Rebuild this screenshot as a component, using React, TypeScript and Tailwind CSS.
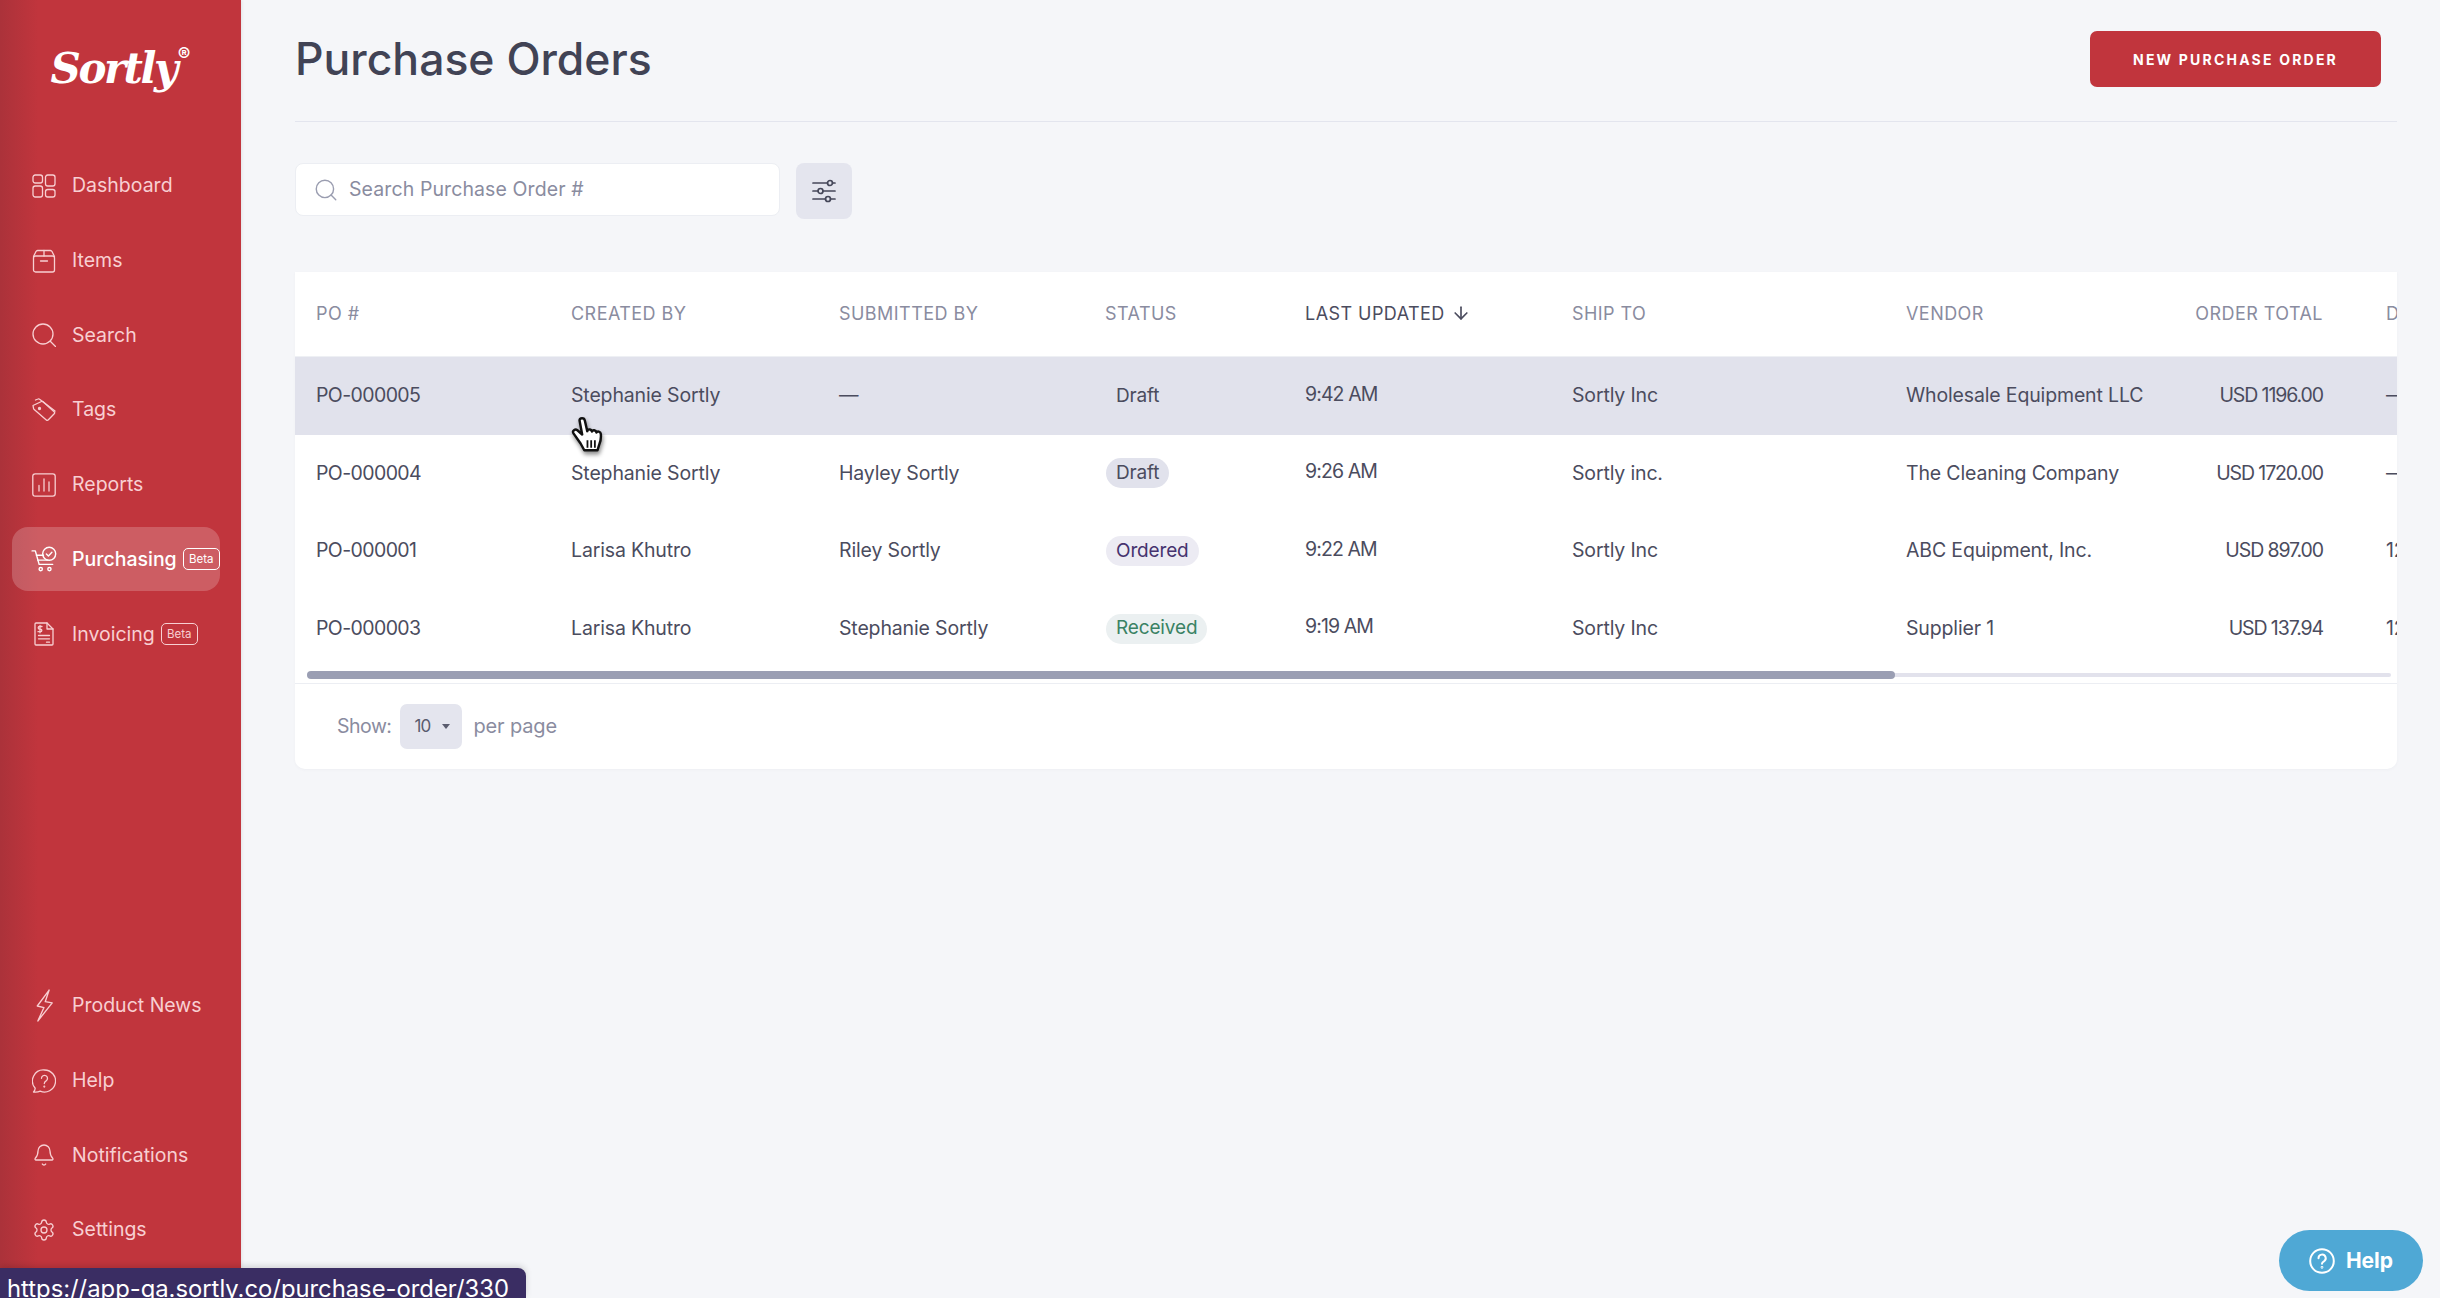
import React from "react";
import { Search, Settings, Bell, ArrowDown } from "lucide-react";

type IconProps = { className?: string };

const S = ({ children, className }: { children: React.ReactNode; className?: string }) => (
  <svg viewBox="0 0 24 24" fill="none" stroke="currentColor" strokeWidth="1.3" strokeLinecap="round" strokeLinejoin="round" className={className}>
    {children}
  </svg>
);

const DashIcon = ({ className }: IconProps) => (
  <S className={className}>
    <rect x="1" y="1" width="9.5" height="8" rx="2.2" />
    <rect x="13.5" y="1" width="9.5" height="11" rx="2.2" />
    <rect x="1" y="12" width="9.5" height="11" rx="2.2" />
    <rect x="13.5" y="15.5" width="9.5" height="7.5" rx="2.2" />
  </S>
);
const BoxIcon = ({ className }: IconProps) => (
  <S className={className}>
    <path d="M1.5 7.5 4 2.5a2 2 0 0 1 1.6-1h12.8a2 2 0 0 1 1.6 1l2.5 5" />
    <rect x="1.5" y="7" width="21" height="16" rx="2" />
    <path d="M12 1.5V7M8.5 12h7" />
  </S>
);
const SearchIcon = ({ className }: IconProps) => (
  <S className={className}>
    <circle cx="11" cy="11" r="10" />
    <path d="m18.5 18.5 5 5" />
  </S>
);
const TagIcon = ({ className }: IconProps) => (
  <S className={className}>
    <path d="M1 8.5 9.5 4.5a1.5 1.5 0 0 1 1.6.2l11 10a1.5 1.5 0 0 1 .1 2.1l-5.8 6a1.5 1.5 0 0 1-2.1.1L2.2 12.6a2 2 0 0 1-.7-1.4Z" transform="translate(0 -1)" />
    <path d="M3.5 2 6 1a1.5 1.5 0 0 1 1.6.2L23 13" />
    <circle cx="7.5" cy="10.5" r="1" fill="currentColor" />
  </S>
);
const ReportIcon = ({ className }: IconProps) => (
  <S className={className}>
    <rect x="0.8" y="0.8" width="22.4" height="22.4" rx="2.4" />
    <path d="M7 18v-5.5M12 18V6M17 18V9" />
  </S>
);
const CartIcon = ({ className }: IconProps) => (
  <S className={className}>
    <path d="M1 4.5h3l3.5 12.5h12.5" />
    <path d="M5 8.5h6.5M6.2 13h9.3" />
    <circle cx="16.8" cy="7.2" r="6" />
    <path d="m14.2 7.3 1.9 1.9 3.2-3.4" />
    <circle cx="9" cy="21.3" r="1.5" />
    <circle cx="17" cy="21.3" r="1.5" />
  </S>
);
const DocIcon = ({ className }: IconProps) => (
  <S className={className}>
    <path d="M4 1h11l6 6v15a1 1 0 0 1-1 1H4a1 1 0 0 1-1-1V2a1 1 0 0 1 1-1Z" />
    <path d="M15 1v6h6M6.5 13.5h11M6.5 16.8h11M14.5 20.2h3" />
    <path d="M10 4.5H7.5a1.2 1.2 0 0 0 0 2.6h1a1.2 1.2 0 0 1 0 2.6H6M8 3.4v7.4" />
  </S>
);
const BoltIcon = ({ className }: IconProps) => (
  <svg viewBox="0 0 18 32" fill="none" stroke="currentColor" strokeWidth="1.3" strokeLinecap="round" strokeLinejoin="round" className={className}>
    <path d="M13.500 1 2 16.500l6.500 1.500L2.500 31 16.500 13.500l-6.800-1.200Z" />
  </svg>
);
const HelpIcon = ({ className }: IconProps) => (
  <S className={className}>
    <path d="M12.5 1a11 11 0 1 1-4.3 21.1c-2 1-4.4 1.1-6.7.9 1-1 1.6-2.3 1.7-3.8A11 11 0 0 1 12.5 1Z" />
    <path d="M9.5 9.3a3 3 0 1 1 4.6 2.6c-1.2.7-1.8 1.3-1.8 2.6" />
    <circle cx="12.3" cy="17.6" r=".4" fill="currentColor" />
  </S>
);
const FilterIcon = ({ className }: IconProps) => (
  <svg viewBox="0 0 24 24" fill="none" stroke="currentColor" strokeWidth="1.7" strokeLinecap="round" className={className}>
    <path d="M1 4h14.5M20.5 4H23M1 12h5M11 12h12M1 20h12.5M18.5 20H23" />
    <circle cx="18" cy="4" r="2.5" />
    <circle cx="8.5" cy="12" r="2.5" />
    <circle cx="16" cy="20" r="2.5" />
  </svg>
);
const HandCursor = ({ className }: IconProps) => (
  <svg viewBox="0 0 32 34" className={className}>
    <path
      d="M8 3.4c0-3 4.6-3 5 0l2.3 10c.4-2.4 4-2.2 4.4.4.6-2 3.8-1.6 4.3.8.8-1.6 3.9-1 4.1 1.4.4 4.2-.3 7.600-1.600 10.400l-1.500 5H12.500l-3.500-6.400L2.300 15.500c-1.600-2.500 1.600-4.600 3.700-3l4.500 4Z"
      fill="#fff"
      stroke="#111"
      strokeWidth="2.3"
      strokeLinejoin="round"
    />
    <path d="M15.500 22v7M19 22v7M22.500 22v7" stroke="#111" strokeWidth="1.700" />
  </svg>
);

function NavItem({ icon, label, active, beta }: { icon: React.ReactNode; label: string; active?: boolean; beta?: boolean }) {
  return (
    <div className={`flex h-[64px] items-center rounded-[16px] pl-[20px] ${active ? "bg-white/20 text-white" : "text-[#f8cfd2]"}`}>
      <span className="flex w-[24px] justify-center">{icon}</span>
      <span className={`ml-[16px] whitespace-nowrap text-[19.500px] ${active ? "font-medium" : ""}`}>{label}</span>
      {beta && (
        <span className={`ml-[6px] flex h-[22px] w-[37px] shrink-0 items-center justify-center rounded-[5px] border text-[11.500px] ${active ? "border-white" : "border-[#f8cfd2]"}`}>Beta</span>
      )}
    </div>
  );
}

const ic = "h-[24px] w-[24px] shrink-0";

const cols = "grid grid-cols-[255px_268px_266px_200px_267px_334px_245px_214px_120px]";

type Row = { po: string; by: string; sub: string; status: string; time: string; ship: string; vendor: string; total: string; d: string };
const rows: Row[] = [
  { po: "PO-000005", by: "Stephanie Sortly", sub: "—", status: "Draft", time: "9:42 AM", ship: "Sortly Inc", vendor: "Wholesale Equipment LLC", total: "USD 1196.00", d: "—" },
  { po: "PO-000004", by: "Stephanie Sortly", sub: "Hayley Sortly", status: "Draft", time: "9:26 AM", ship: "Sortly inc.", vendor: "The Cleaning Company", total: "USD 1720.00", d: "—" },
  { po: "PO-000001", by: "Larisa Khutro", sub: "Riley Sortly", status: "Ordered", time: "9:22 AM", ship: "Sortly Inc", vendor: "ABC Equipment, Inc.", total: "USD 897.00", d: "12" },
  { po: "PO-000003", by: "Larisa Khutro", sub: "Stephanie Sortly", status: "Received", time: "9:19 AM", ship: "Sortly Inc", vendor: "Supplier 1", total: "USD 137.94", d: "12" },
];

const badge: Record<string, string> = {
  Draft: "bg-[#e1e2ec] text-[#4b4c5e]",
  Ordered: "bg-[#ecebf3] text-[#46336f]",
  Received: "bg-[#ebf0f1] text-[#3a8264]",
};

function Header({ children, dark, right }: { children: React.ReactNode; dark?: boolean; right?: boolean }) {
  return (
    <div className={`flex items-center px-[21px] pb-[2px] text-[18px] tracking-[0.45px] ${right ? "justify-end" : ""} ${dark ? "text-[#4b4c5e]" : "text-[#8a8c9f]"}`}>
      {children}
    </div>
  );
}

function TableRow({ row, hover }: { row: Row; hover: boolean }) {
  const cell = "flex items-center px-[21px] whitespace-nowrap";
  return (
    <div className={`${cols} h-[77.600px] text-[19.500px] tracking-[-0.15px] text-[#4b4c5e] ${hover ? "bg-[#e1e2ec]" : ""}`}>
      <div className={`${cell} tracking-[-0.6px]`}>{row.po}</div>
      <div className={cell}>{row.by}</div>
      <div className={cell}>{row.sub}</div>
      <div className={`${cell} !pl-[22px]`}>
        <span className={`flex h-[30px] items-center rounded-full px-[10px] text-[19px] ${hover ? "text-[#4b4c5e]" : badge[row.status]}`}>{row.status}</span>
      </div>
      <div className={`${cell} pb-[3px] tracking-[-0.9px]`}>{row.time}</div>
      <div className={cell}>{row.ship}</div>
      <div className={cell}>{row.vendor}</div>
      <div className={`${cell} justify-end tracking-[-1.1px]`}>{row.total}</div>
      <div className={`${cell} !pl-[42px]`}>{row.d}</div>
    </div>
  );
}

export default function App() {
  return (
    <div className="relative flex h-[1298px] w-[2440px] overflow-hidden bg-[#f5f6f9] font-['Inter','Liberation_Sans',sans-serif]">
      <aside className="flex h-full w-[241px] shrink-0 flex-col bg-[linear-gradient(90deg,#ab323a_0%,#c1353d_16%,#c1353d_100%)] pb-[36px] pl-[12px] pr-[21px] shadow-[1px_0_3px_rgba(0,0,0,0.08)]">
        <div className="flex h-[154px] items-start justify-center pl-[9px] pt-[41px] text-white">
          <span className="font-['DejaVu_Serif',serif] text-[42px] font-bold italic leading-[56px] tracking-[-2.500px]">Sortly</span>
          <span className="ml-[2px] mt-[3px] text-[19px] font-bold leading-[22px]">®</span>
        </div>
        <nav className="flex flex-col gap-[10.700px]">
          <NavItem icon={<DashIcon className={ic} />} label="Dashboard" />
          <NavItem icon={<BoxIcon className={ic} />} label="Items" />
          <NavItem icon={<SearchIcon className={ic} />} label="Search" />
          <NavItem icon={<TagIcon className={ic} />} label="Tags" />
          <NavItem icon={<ReportIcon className={ic} />} label="Reports" />
          <NavItem icon={<CartIcon className="h-[26px] w-[26px] shrink-0" />} label="Purchasing" active beta />
          <NavItem icon={<DocIcon className={ic} />} label="Invoicing" beta />
        </nav>
        <div className="mt-auto flex flex-col gap-[10.700px]">
          <NavItem icon={<BoltIcon className="h-[33px] w-[19px] shrink-0" />} label="Product News" />
          <NavItem icon={<HelpIcon className={ic} />} label="Help" />
          <NavItem icon={<Bell strokeWidth={1.3} className={ic} />} label="Notifications" />
          <NavItem icon={<Settings strokeWidth={1.3} className={ic} />} label="Settings" />
        </div>
      </aside>

      <main className="min-w-0 flex-1 pl-[54px] pr-[43px]">
        <header className="flex h-[122px] items-start justify-between border-b border-[#e3e5ee]">
          <h1 className="pt-[32px] text-[44.500px] font-medium leading-[54px] text-[#414355]">Purchase Orders</h1>
          <button className="mr-[16px] mt-[31px] flex h-[56px] w-[291px] items-center justify-center rounded-[7px] bg-[#c1353d] text-[14px] font-bold tracking-[2.200px] text-white">
            NEW PURCHASE ORDER
          </button>
        </header>

        <div className="mt-[41px] flex items-start gap-[16px]">
          <div className="flex h-[53px] w-[485px] items-center rounded-[8px] border border-[#eceef3] bg-white pl-[17px]">
            <Search strokeWidth={1.3} className="h-[26px] w-[26px] text-[#9a9db0]" />
            <span className="ml-[10px] pt-[1px] text-[19.500px] tracking-[0.1px] text-[#8a8c9f]">Search Purchase Order #</span>
          </div>
          <button className="flex h-[56px] w-[56px] items-center justify-center rounded-[8px] bg-[#e4e5ee] text-[#454759]">
            <FilterIcon className="h-[24px] w-[24px]" />
          </button>
        </div>

        <section className="mt-[53px] h-[497px] overflow-hidden rounded-b-[10px] bg-white shadow-[0_1px_3px_rgba(80,85,110,0.04)]">
          <div className={`${cols} h-[85px] whitespace-nowrap border-b border-[#eef0f4]`}>
            <Header>PO #</Header>
            <Header>CREATED BY</Header>
            <Header>SUBMITTED BY</Header>
            <Header>STATUS</Header>
            <Header dark>
              LAST UPDATED
              <ArrowDown strokeWidth={2} className="ml-[6px] h-[20px] w-[20px]" />
            </Header>
            <Header>SHIP TO</Header>
            <Header>VENDOR</Header>
            <Header right>ORDER TOTAL</Header>
            <div className="flex items-center pb-[2px] pl-[42px] text-[18px] text-[#8a8c9f]">DUE</div>
          </div>
          {rows.map((r, i) => (
            <TableRow key={r.po} row={r} hover={i === 0} />
          ))}
          <div className="relative ml-[12px] mr-[6px] mt-[4px] h-[8px]">
            <div className="mt-[2px] h-[4px] translate-y-[2px] rounded-full bg-[#e2e2ec]" />
            <div className="absolute left-0 top-0 h-[8px] w-[1588px] rounded-full bg-[#9a9eb3]" />
          </div>
          <div className="mt-[4px] flex h-[85px] items-center border-t border-[#eceef3] pl-[42px] text-[19.500px] tracking-[-0.15px] text-[#8a8c9f]">
            <span className="tracking-[-0.5px]">Show:</span>
            <span className="ml-[9px] flex h-[45px] w-[62px] items-center rounded-[7px] bg-[#e4e5ee] pl-[14px] text-[17px] tracking-[-0.8px] text-[#5a5c6e]">
              10
              <span className="ml-[11px] h-0 w-0 border-x-[4.500px] border-t-[5px] border-x-transparent border-t-[#5a5c6e]" />
            </span>
            <span className="ml-[11px] text-[20px]">per page</span>
          </div>
        </section>
      </main>

      <HandCursor className="absolute left-[571px] top-[417px] h-[36px] w-[34px] drop-shadow-[1px_3px_2px_rgba(0,0,0,0.45)]" />

      <div className="absolute bottom-0 left-0 h-[30px] w-[526px] overflow-hidden rounded-tr-[8px] bg-[#3a2d63] pl-[7px] text-[23.800px] leading-[30px] whitespace-nowrap text-white shadow-[0_-2px_6px_rgba(0,0,0,0.15)]">
        <span className="relative top-[6px]">https://app-qa.sortly.co/purchase-order/330</span>
      </div>

      <button className="absolute left-[2279px] top-[1230px] flex h-[61px] w-[144px] items-center justify-center gap-[11px] rounded-full bg-[#4fa8d5] text-[21px] font-bold text-white">
        <svg viewBox="0 0 26 26" fill="none" stroke="currentColor" strokeWidth="2" strokeLinecap="round" className="h-[26px] w-[26px]">
          <circle cx="13" cy="13" r="11.800" />
          <path d="M9.500 10.200a3.600 3.600 0 1 1 5.400 3.100c-1.300.7-1.900 1.300-1.900 2.500" />
          <circle cx="13" cy="19.300" r=".4" fill="currentColor" />
        </svg>
        Help
      </button>
    </div>
  );
}
